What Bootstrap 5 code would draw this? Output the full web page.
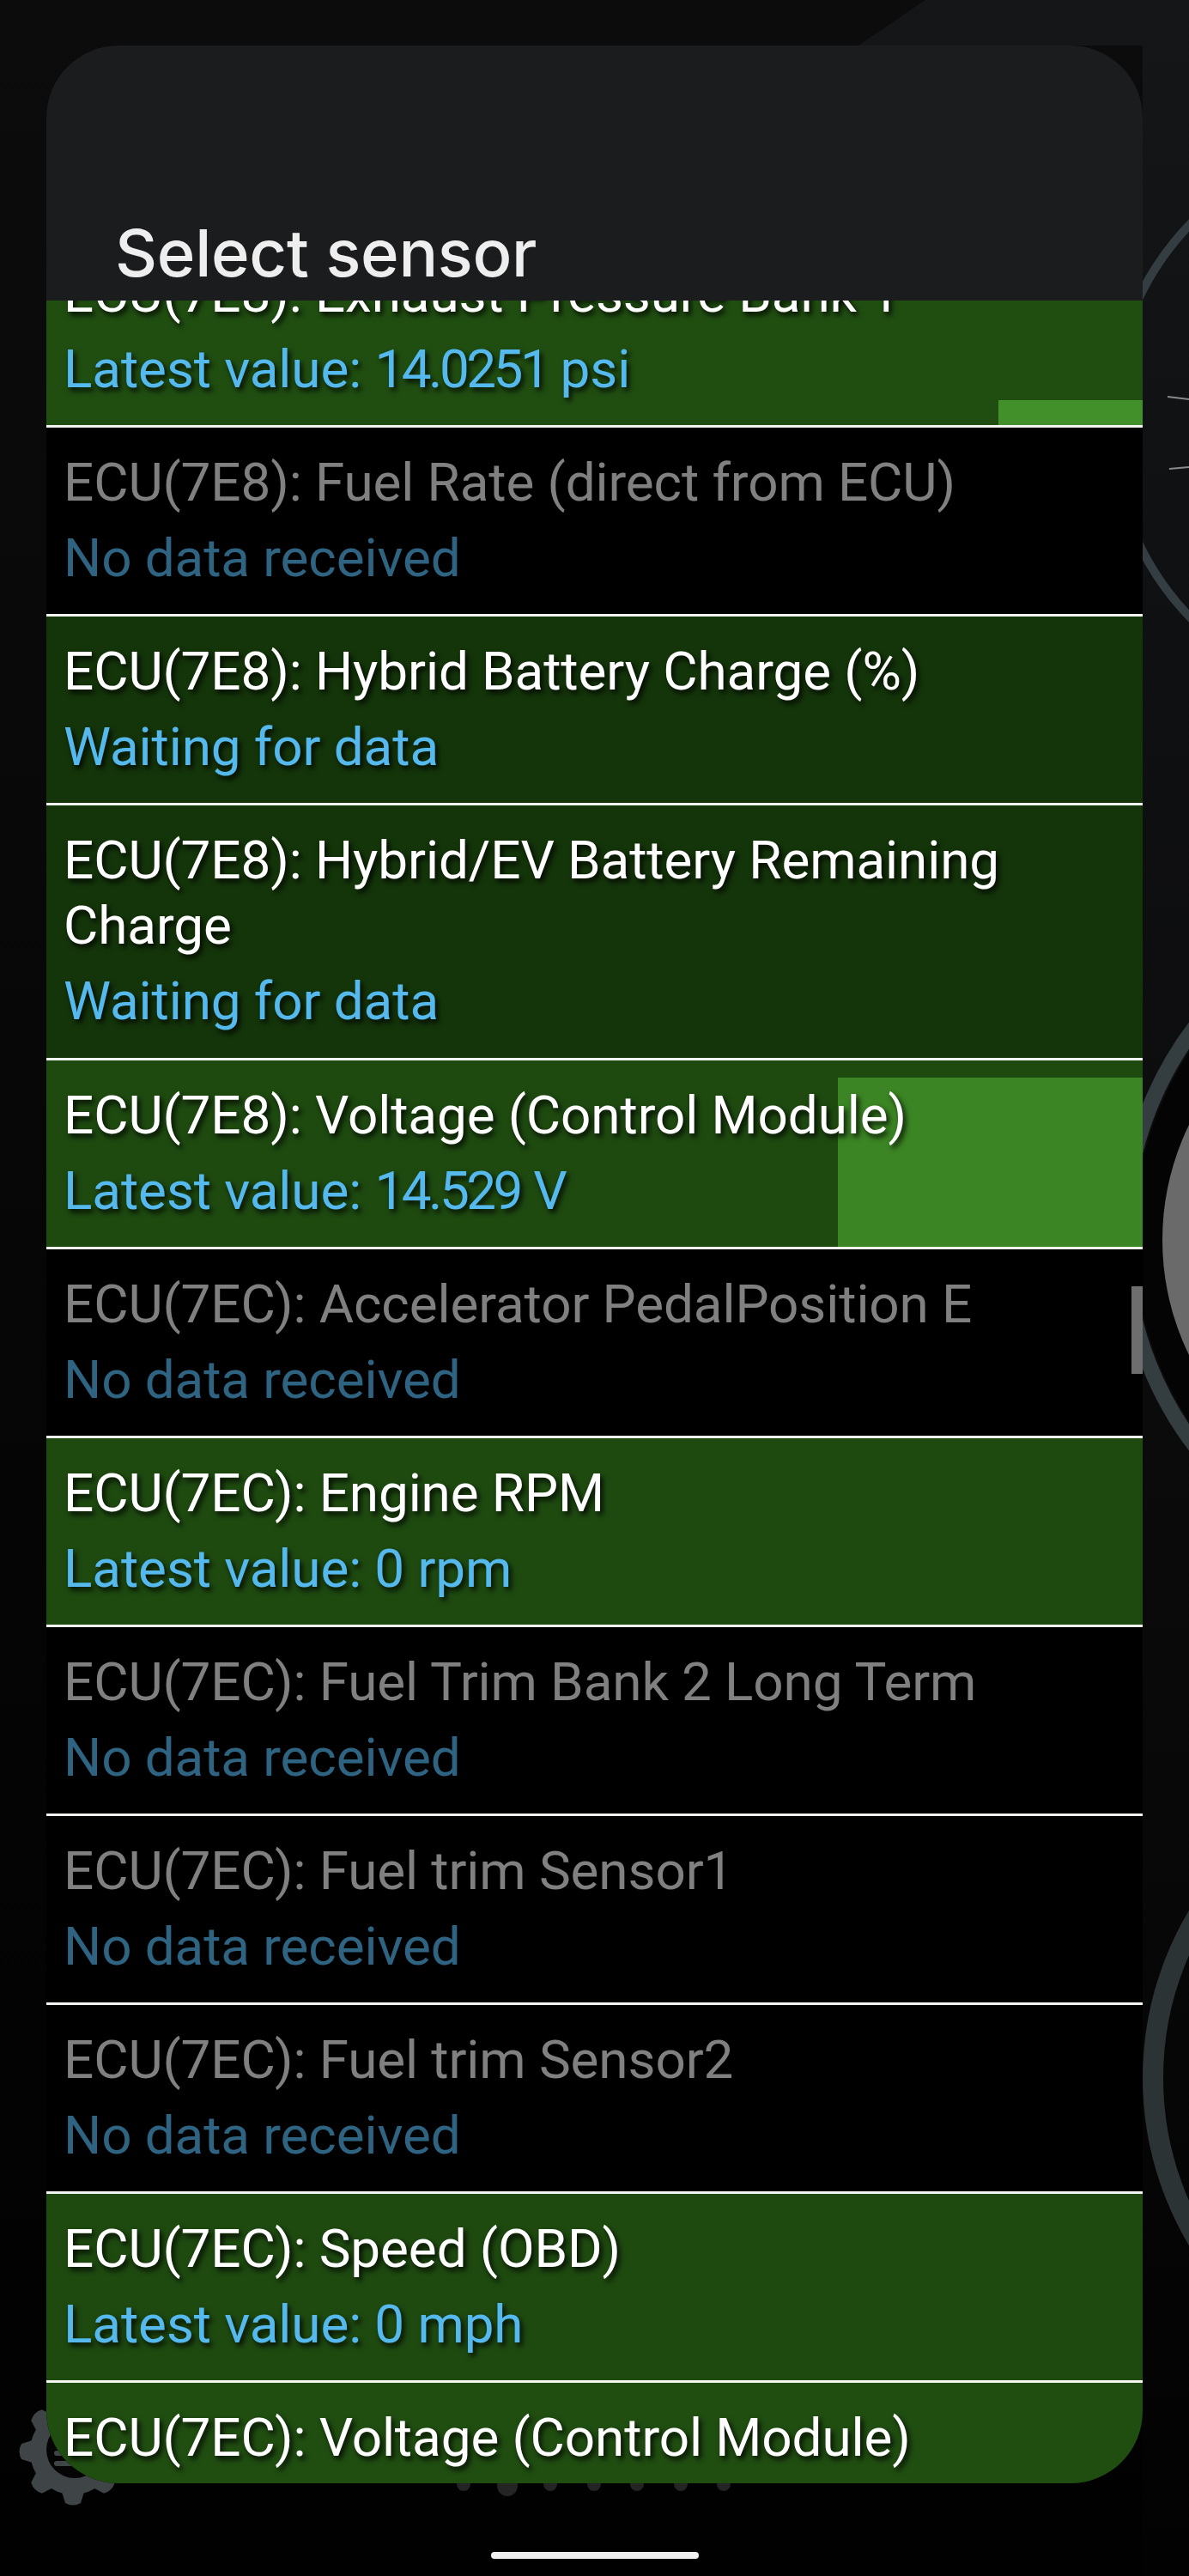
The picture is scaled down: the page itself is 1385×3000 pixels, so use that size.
<!DOCTYPE html>
<html lang="en">
<head>
<meta charset="utf-8">
<title>Select sensor</title>
<link href="https://cdn.jsdelivr.net/npm/bootstrap@5.3.0/dist/css/bootstrap.min.css" rel="stylesheet">
<style>
html,body{background:#050505;margin:0}
.screen{position:relative;width:1385px;height:3000px;overflow:hidden;background:#060606}
.backdrop{position:absolute;left:0;top:0;width:1385px;height:3000px}
.dialog-box{position:absolute;left:54px;top:53px;width:1277px;height:2839px;border-radius:84px;overflow:hidden;background:#000}
.dialog-head{height:297px;background:#1b1c1e;padding:193px 0 0 80px;font-family:Inter,sans-serif;font-weight:500;font-size:76px;line-height:96px;letter-spacing:-.3px;color:#eeeeee;white-space:nowrap;position:relative;z-index:2}
.sensor-list{margin-top:-72px}
.sensor-row{position:relative;height:220px;padding:26px 20px 0 20px;border-bottom:3px solid #f2f5f0;font-family:Roboto,sans-serif;font-size:62px;line-height:76px;letter-spacing:-.1px;color:#fff;background:#000}
.sensor-row.tall{height:297px}
.sensor-row .sub{margin-top:12px;color:#56b9ee}
.sensor-row .txt{position:relative;white-space:normal}
.sensor-row.live .txt{text-shadow:3px 4px 6px rgba(0,0,0,.9)}
.sensor-row.idle .name{color:#808080}
.sensor-row.idle .sub{color:#2e6482}
.slim-num{letter-spacing:-3.5px}
.g1{background:#204e11}.g2{background:#14350a}.g3{background:#1e4a10}
.level{position:absolute;right:0;bottom:0;background:#3b8524}
.level.bright{background:#42902a}
.scroll-thumb{position:absolute;right:0;top:1445px;width:13px;height:102px;background:#6e6e6e;z-index:1}
.home-pill{position:absolute;left:572px;top:2972px;width:242px;height:8px;border-radius:4px;background:#efefef}
</style>
</head>
<body>
<div class="screen">
<svg class="backdrop" viewBox="0 0 1385 3000" aria-hidden="true">
<defs>
<linearGradient id="sideShade" x1="0" y1="0" x2="0" y2="1"><stop offset="0" stop-color="#151618"/><stop offset=".2" stop-color="#101112"/><stop offset=".55" stop-color="#0b0b0c"/><stop offset="1" stop-color="#020202"/></linearGradient>
<linearGradient id="leftShade" x1="0" y1="0" x2="0" y2="1"><stop offset="0" stop-color="#0c0c0d"/><stop offset=".5" stop-color="#060606"/><stop offset="1" stop-color="#010101"/></linearGradient>
<g id="tooth"><path d="M-14 -44 L-9 -60 Q0 -65 9 -60 L14 -44 Z"/></g>
</defs>
<rect width="1385" height="3000" fill="url(#leftShade)"/>
<polygon points="1078,0 1385,0 1385,3000 1331,3000 1331,53 1000,53" fill="url(#sideShade)"/>
<g fill="none">
<circle cx="1624" cy="490" r="330" stroke="#333d42" stroke-width="10"/>
<circle cx="1713" cy="1440" r="403" stroke="#343e41" stroke-width="18"/>
<circle cx="1710" cy="2420" r="367" stroke="#2b3335" stroke-width="24"/>
</g>
<circle cx="1713" cy="1440" r="392" fill="#040404"/>
<circle cx="1659" cy="1444" r="305" fill="#6a6a6a"/>
<g stroke="#8a8a8a" stroke-width="2"><line x1="1360" y1="462" x2="1385" y2="465"/><line x1="1362" y1="546" x2="1385" y2="544"/></g>
<g fill="#3f4447">
<circle cx="85" cy="2855" r="50"/>
<use href="#tooth" transform="translate(85 2855) rotate(-45)"/>
<use href="#tooth" transform="translate(85 2855) rotate(-90)"/>
<use href="#tooth" transform="translate(85 2855) rotate(-135)"/>
<use href="#tooth" transform="translate(85 2855) rotate(180)"/>
<use href="#tooth" transform="translate(85 2855) rotate(135)"/>
</g>
<circle cx="87" cy="2853" r="33" fill="#050505"/>
<g fill="#3f4447"><rect x="63" y="2854" width="16" height="6" rx="3"/><rect x="63" y="2866" width="26" height="6" rx="3"/></g>
<g fill="#242424"><circle cx="540" cy="2893" r="8"/><circle cx="591" cy="2895" r="12"/><circle cx="641" cy="2893" r="8"/><circle cx="692" cy="2893" r="8"/><circle cx="742" cy="2893" r="8"/><circle cx="793" cy="2893" r="8"/><circle cx="843" cy="2893" r="8"/></g>
</svg>
<div class="dialog-box">
<div class="dialog-head">Select sensor</div>
<div class="scroll-thumb"></div>
<div class="sensor-list position-relative">
<div class="sensor-row live g1"><div class="level bright" style="width:168px;height:29px"></div><div class="txt"><div class="name">ECU(7E8): Exhaust Pressure Bank 1</div><div class="sub">Latest value: <span class="slim-num">14.0251</span> psi</div></div></div>
<div class="sensor-row idle"><div class="txt"><div class="name">ECU(7E8): Fuel Rate (direct from ECU)</div><div class="sub">No data received</div></div></div>
<div class="sensor-row live g2"><div class="txt"><div class="name">ECU(7E8): Hybrid Battery Charge (%)</div><div class="sub">Waiting for data</div></div></div>
<div class="sensor-row tall live g2"><div class="txt"><div class="name">ECU(7E8): Hybrid/EV Battery Remaining Charge</div><div class="sub">Waiting for data</div></div></div>
<div class="sensor-row live g3"><div class="level" style="width:355px;height:197px"></div><div class="txt"><div class="name">ECU(7E8): Voltage (Control Module)</div><div class="sub">Latest value: <span class="slim-num">14.529</span> V</div></div></div>
<div class="sensor-row idle"><div class="txt"><div class="name">ECU(7EC): Accelerator PedalPosition E</div><div class="sub">No data received</div></div></div>
<div class="sensor-row live g3"><div class="txt"><div class="name">ECU(7EC): Engine RPM</div><div class="sub">Latest value: 0 rpm</div></div></div>
<div class="sensor-row idle"><div class="txt"><div class="name">ECU(7EC): Fuel Trim Bank 2 Long Term</div><div class="sub">No data received</div></div></div>
<div class="sensor-row idle"><div class="txt"><div class="name">ECU(7EC): Fuel trim Sensor1</div><div class="sub">No data received</div></div></div>
<div class="sensor-row idle"><div class="txt"><div class="name">ECU(7EC): Fuel trim Sensor2</div><div class="sub">No data received</div></div></div>
<div class="sensor-row live g3"><div class="txt"><div class="name">ECU(7EC): Speed (OBD)</div><div class="sub">Latest value: 0 mph</div></div></div>
<div class="sensor-row live g1"><div class="txt"><div class="name">ECU(7EC): Voltage (Control Module)</div></div></div>
</div>
</div>
<div class="home-pill"></div>
</div>
<script src="https://cdn.jsdelivr.net/npm/bootstrap@5.3.0/dist/js/bootstrap.bundle.min.js"></script>
</body>
</html>
